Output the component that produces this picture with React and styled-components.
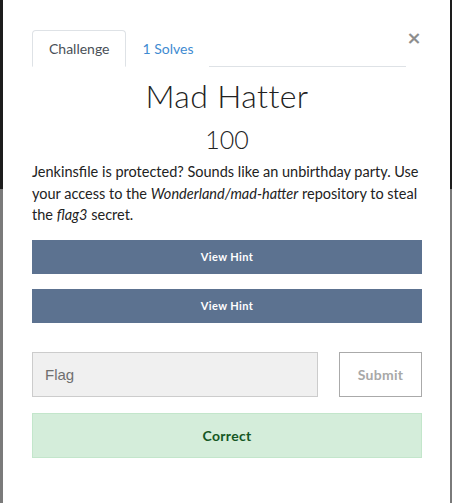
import React, { useState } from "react";
import styled, { createGlobalStyle } from "styled-components";

const GlobalStyle = createGlobalStyle`
  html, body {
    margin: 0;
    padding: 0;
    height: 503px;
    overflow: hidden;
    background: linear-gradient(to bottom, #1d1d1d 0, #1d1d1d 189px, #7a7a7a 189px);
  }
  * { box-sizing: border-box; }
`;

const Modal = styled.div`
  margin: 0 2px 0 3px;
  height: 503px;
  background: #ffffff;
  padding: 30px 28px 0 29px;
  font-family: Lato, "Open Sans", sans-serif;
  color: #212529;
`;

const TabRow = styled.div`
  display: flex;
  align-items: flex-start;
`;

const Tabs = styled.div`
  display: flex;
  flex: 1;
  border-bottom: 1px solid #dee2e6;
`;

const TabItem = styled.div`
  height: 37px;
  padding: 0 15px 0 16px;
  display: flex;
  align-items: center;
  font-size: 14px;
  margin-bottom: -1px;
  border: 1px solid ${(p) => (p.$active ? "#dee2e6" : "transparent")};
  border-bottom-color: ${(p) => (p.$active ? "#ffffff" : "transparent")};
  border-radius: 4px 4px 0 0;
  color: ${(p) => (p.$active ? "#495057" : "#3f8bd1")};
  background: #ffffff;
`;

const Close = styled.div`
  width: 16px;
  margin-left: auto;
  margin-top: -1px;
  font-family: "DejaVu Sans", sans-serif;
  font-size: 18px;
  line-height: 18px;
  font-weight: bold;
  color: #8e8e8e;
  text-align: center;
`;

const Title = styled.h2`
  margin: 9px 0 0;
  text-align: center;
  font-family: Lato, sans-serif;
  font-weight: 300;
  font-size: 32px;
  line-height: 40px;
  letter-spacing: 0.4px;
  color: #222;
`;

const Points = styled.h3`
  margin: 8px 0 0;
  text-align: center;
  font-weight: 300;
  font-size: 25px;
  line-height: 30px;
  color: #222;
`;

const Description = styled.p`
  margin: 7px 0 0;
  font-size: 14.5px;
  line-height: 21.5px;
  color: #222;
`;

const HintList = styled.div`
  display: flex;
  flex-direction: column;
  gap: 15px;
  margin-top: 14px;
`;

const HintButton = styled.button`
  height: 34px;
  border: none;
  background: #5c7290;
  color: #ffffff;
  font-family: Lato, sans-serif;
  font-weight: 700;
  font-size: 11px;
  letter-spacing: 0.4px;
`;

const FlagRow = styled.div`
  display: flex;
  gap: 21px;
  margin-top: 29px;
`;

const FlagInput = styled.input`
  flex: 1;
  height: 45px;
  border: 1px solid #cccccc;
  background: #f0f0f0;
  padding: 0 12px;
  font-family: "Liberation Sans", Arial, sans-serif;
  font-size: 15px;
  color: #333;
  outline: none;
  &::placeholder { color: #6f6f6f; }
`;

const SubmitButton = styled.button`
  width: 83px;
  height: 45px;
  background: #ffffff;
  border: 1px solid #aaaaaa;
  color: #a8a8a8;
  font-family: Lato, sans-serif;
  font-weight: 700;
  font-size: 14px;
  letter-spacing: 0.3px;
`;

const Notice = styled.div`
  margin-top: 16px;
  height: 45px;
  display: flex;
  align-items: center;
  justify-content: center;
  background: #d4edda;
  border: 1px solid #c3e6cb;
  color: #155724;
  font-weight: 700;
  font-size: 14px;
  letter-spacing: 0.3px;
`;

export default function App() {
  const [flag, setFlag] = useState("");
  return (
    <>
      <GlobalStyle />
      <Modal>
        <TabRow>
          <Tabs>
            <TabItem $active>Challenge</TabItem>
            <TabItem>1 Solves</TabItem>
          </Tabs>
          <Close>×</Close>
        </TabRow>
        <Title>Mad Hatter</Title>
        <Points>100</Points>
        <Description>
          Jenkinsfile is protected? Sounds like an unbirthday party. Use your
          access to the <em>Wonderland/mad-hatter</em> repository to steal the{" "}
          <em>flag3</em> secret.
        </Description>
        <HintList>
          <HintButton>View Hint</HintButton>
          <HintButton>View Hint</HintButton>
        </HintList>
        <FlagRow>
          <FlagInput
            placeholder="Flag"
            value={flag}
            onChange={(e) => setFlag(e.target.value)}
          />
          <SubmitButton>Submit</SubmitButton>
        </FlagRow>
        <Notice>Correct</Notice>
      </Modal>
    </>
  );
}
